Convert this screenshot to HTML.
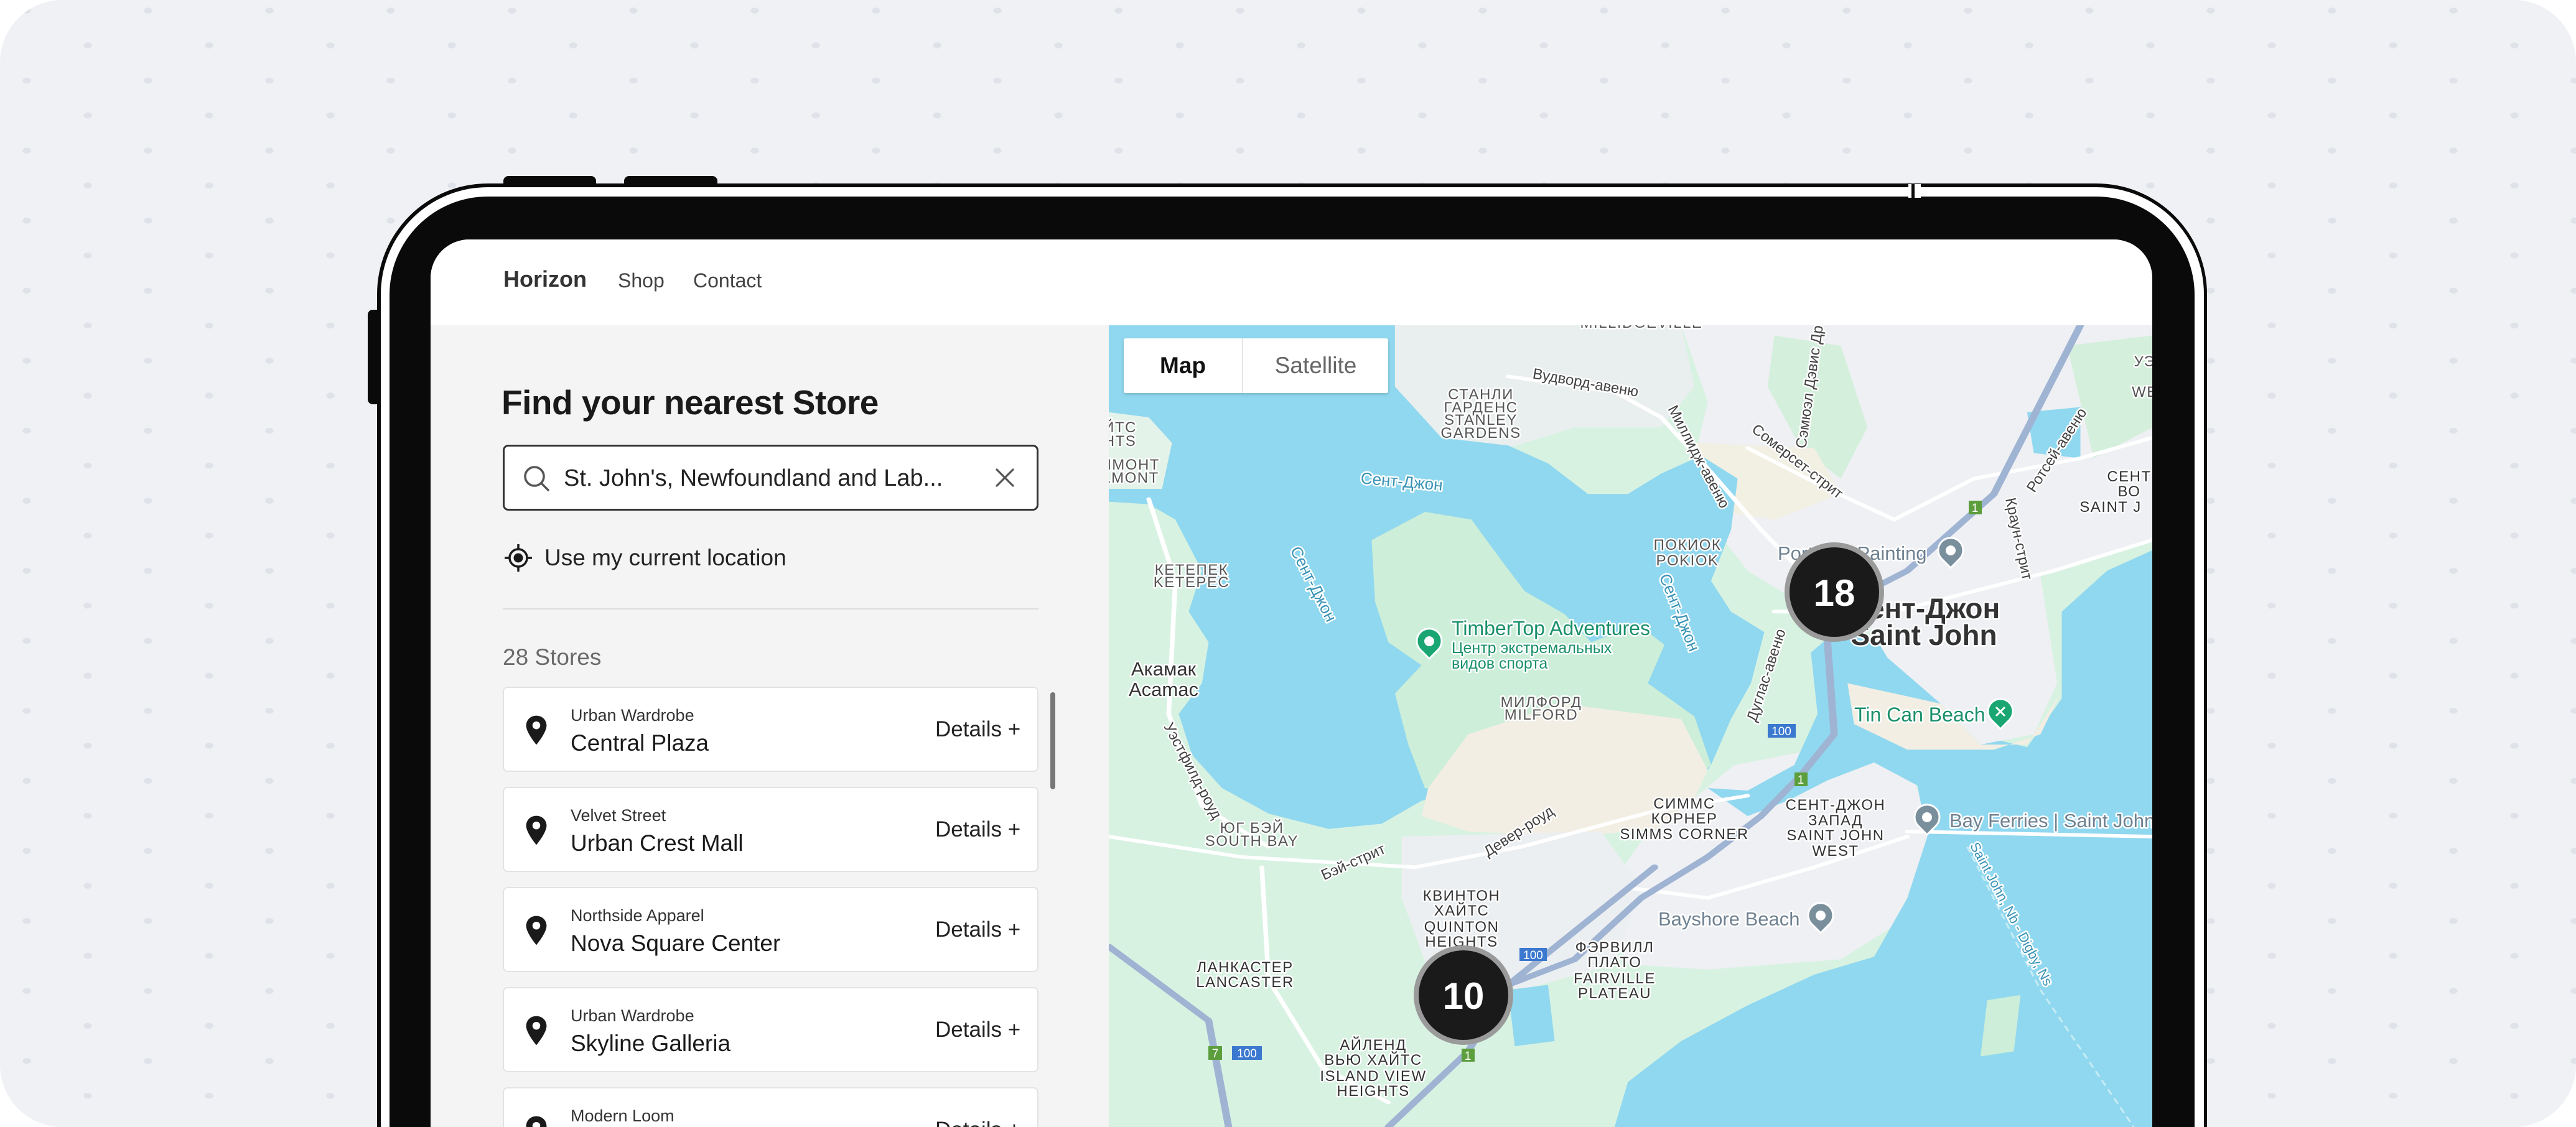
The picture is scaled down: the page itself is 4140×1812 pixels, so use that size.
<!DOCTYPE html>
<html><head><meta charset="utf-8"><style>
*{margin:0;padding:0;box-sizing:border-box}
html,body{width:4140px;height:1812px;overflow:hidden;background:#fff;font-family:"Liberation Sans","Noto Sans CJK SC",sans-serif}
.bg{position:absolute;left:0;top:0;width:4140px;height:1812px;border-radius:100px;background-color:#f0f1f5;
background-image:radial-gradient(ellipse 7px 5px at 141px 73px,#dfe2e8 90%,transparent 100%),radial-gradient(ellipse 7px 5px at 43px 17px,#dfe2e8 90%,transparent 100%);
background-size:195px 112.6px;overflow:hidden}
.abs{position:absolute}
.card{position:absolute;left:0;width:861px;height:137px;background:#fff;border:2px solid #e3e3e3;border-radius:8px}
.card .pin{position:absolute;left:33px;top:43px;width:38px;height:50px}
.card .lab{position:absolute;left:107px;top:28px;font-size:27px;color:#333;line-height:32px}
.card .nm{position:absolute;left:107px;top:67px;font-size:37px;color:#1a1a1a;line-height:44px}
.card .det{position:absolute;left:693px;top:46px;font-size:35px;color:#222;line-height:42px}
.m text{font-family:"Liberation Sans","Noto Sans CJK SC",sans-serif;paint-order:stroke;stroke:#fff;stroke-width:5px;stroke-linejoin:round}
</style></head><body>
<div class="bg">
  <div class="abs" style="left:809px;top:283px;width:149px;height:20px;background:#0a0a0a;border-radius:8px 8px 0 0"></div>
  <div class="abs" style="left:1003px;top:283px;width:150px;height:20px;background:#0a0a0a;border-radius:8px 8px 0 0"></div>
  <div class="abs" style="left:591px;top:498px;width:20px;height:152px;background:#0a0a0a;border-radius:8px 0 0 8px"></div>
  <div class="abs" style="left:606px;top:295px;width:2941px;height:1517px;background:#0a0a0a;border-radius:178px 178px 0 0"></div>
  <div class="abs" style="left:612px;top:301px;width:2930px;height:1511px;background:#fff;border-radius:172px 172px 0 0"></div>
  <div class="abs" style="left:626px;top:316px;width:2901px;height:1496px;background:#0a0a0a;border-radius:158px 158px 0 0"></div>
  <div class="abs" style="left:3067px;top:296px;width:20px;height:22px;background:#fff"></div>
  <div class="abs" style="left:3072px;top:296px;width:5px;height:22px;background:#0a0a0a"></div>
  <div class="abs" style="left:692px;top:385px;width:2767px;height:1427px;background:#f4f4f4;border-radius:62px 62px 0 0;overflow:hidden">
    <div class="abs" style="left:0;top:0;width:2767px;height:138px;background:#fff"></div>
    <div class="abs" style="left:117px;top:43px;font-size:36px;font-weight:bold;color:#333;line-height:42px">Horizon</div>
    <div class="abs" style="left:301px;top:45px;font-size:32px;color:#444;line-height:42px">Shop</div>
    <div class="abs" style="left:422px;top:45px;font-size:32px;color:#444;line-height:42px">Contact</div>
  </div>
  <div class="abs" style="left:806px;top:614px;font-size:55px;font-weight:bold;color:#1a1a1a;line-height:66px;letter-spacing:-0.5px">Find your nearest Store</div>
  <div class="abs" style="left:808px;top:715px;width:861px;height:106px;background:#fff;border:3px solid #333;border-radius:9px"></div>
  <svg class="abs" style="left:838px;top:745px" width="48" height="48" viewBox="0 0 48 48"><circle cx="21" cy="21" r="15" fill="none" stroke="#555" stroke-width="3.5"/><line x1="32" y1="32" x2="43" y2="43" stroke="#555" stroke-width="3.5" stroke-linecap="round"/></svg>
  <div class="abs" style="left:906px;top:746px;font-size:38px;color:#222;line-height:46px">St. John's, Newfoundland and Lab...</div>
  <svg class="abs" style="left:1598px;top:751px" width="34" height="34" viewBox="0 0 34 34"><path d="M4 4L30 30M30 4L4 30" stroke="#555" stroke-width="3.2" stroke-linecap="round"/></svg>
  <svg class="abs" style="left:811px;top:875px" width="44" height="44" viewBox="0 0 44 44"><circle cx="22" cy="22" r="14" fill="none" stroke="#1a1a1a" stroke-width="3.5"/><circle cx="22" cy="22" r="7.5" fill="#1a1a1a"/><path d="M22 0V8M22 36V44M0 22H8M36 22H44" stroke="#1a1a1a" stroke-width="3.5"/></svg>
  <div class="abs" style="left:875px;top:874px;font-size:37px;color:#222;line-height:46px">Use my current location</div>
  <div class="abs" style="left:808px;top:978px;width:861px;height:2px;background:#dcdcdc"></div>
  <div class="abs" style="left:808px;top:1035px;font-size:37px;color:#6a6a6a;line-height:44px">28 Stores</div>

  <div class="abs" style="left:808px;top:1104px;width:861px;height:708px;overflow:hidden">
  <div class="card" style="top:0"><svg class="pin" viewBox="0 0 24 32"><path d="M12 1C6 1 1.5 5.5 1.5 11.3 1.5 18.5 12 31 12 31S22.5 18.5 22.5 11.3C22.5 5.5 18 1 12 1z" fill="#1a1a1a"/><circle cx="12" cy="11" r="4" fill="#fff"/></svg><div class="lab">Urban Wardrobe</div><div class="nm">Central Plaza</div><div class="det">Details +</div></div>
  <div class="card" style="top:161px"><svg class="pin" viewBox="0 0 24 32"><path d="M12 1C6 1 1.5 5.5 1.5 11.3 1.5 18.5 12 31 12 31S22.5 18.5 22.5 11.3C22.5 5.5 18 1 12 1z" fill="#1a1a1a"/><circle cx="12" cy="11" r="4" fill="#fff"/></svg><div class="lab">Velvet Street</div><div class="nm">Urban Crest Mall</div><div class="det">Details +</div></div>
  <div class="card" style="top:322px"><svg class="pin" viewBox="0 0 24 32"><path d="M12 1C6 1 1.5 5.5 1.5 11.3 1.5 18.5 12 31 12 31S22.5 18.5 22.5 11.3C22.5 5.5 18 1 12 1z" fill="#1a1a1a"/><circle cx="12" cy="11" r="4" fill="#fff"/></svg><div class="lab">Northside Apparel</div><div class="nm">Nova Square Center</div><div class="det">Details +</div></div>
  <div class="card" style="top:483px"><svg class="pin" viewBox="0 0 24 32"><path d="M12 1C6 1 1.5 5.5 1.5 11.3 1.5 18.5 12 31 12 31S22.5 18.5 22.5 11.3C22.5 5.5 18 1 12 1z" fill="#1a1a1a"/><circle cx="12" cy="11" r="4" fill="#fff"/></svg><div class="lab">Urban Wardrobe</div><div class="nm">Skyline Galleria</div><div class="det">Details +</div></div>
  <div class="card" style="top:644px"><svg class="pin" viewBox="0 0 24 32"><path d="M12 1C6 1 1.5 5.5 1.5 11.3 1.5 18.5 12 31 12 31S22.5 18.5 22.5 11.3C22.5 5.5 18 1 12 1z" fill="#1a1a1a"/><circle cx="12" cy="11" r="4" fill="#fff"/></svg><div class="lab">Modern Loom</div><div class="nm">Harbor Point</div><div class="det">Details +</div></div>
  </div>
  <div class="abs" style="left:1688px;top:1113px;width:8px;height:156px;background:#777;border-radius:4px"></div>

  <div class="abs" style="left:1782px;top:523px;width:1677px;height:1289px;overflow:hidden;background:#d8f2e2">
    <svg class="abs" style="left:0;top:0" width="1677" height="1289" viewBox="0 0 1568 1568" preserveAspectRatio="none">
      <path d="M860,0 L1568,0 L1568,420 L1440,470 L1300,520 L1180,560 L1060,560 L960,480 L900,380 L880,260 L900,150 Z" fill="#eef0f3"/>
      <path d="M420,0 L860,0 L880,120 L830,200 L700,200 L600,240 L470,220 L420,150 Z" fill="#e9efee"/>
      <path d="M1000,20 L1100,40 L1140,200 L1100,300 L1040,240 L990,120 Z" fill="#d4f0dc"/>
      <path d="M1440,40 L1568,20 L1568,200 L1480,260 Z" fill="#d4f0dc"/>
      <path d="M880,230 L1060,240 L1100,330 L1000,380 L900,360 Z" fill="#f2efe3"/>
      <path d="M0,0 L430,0 L430,120 L500,220 L600,235 L660,270 L720,330 L780,330 L830,290 L890,255 L945,300 L935,400 L905,500 L935,560 L985,600 L965,700 L935,770 L905,860 L880,905 L800,895 L760,860 L720,880 L640,890 L540,910 L470,930 L410,975 L330,985 L240,955 L170,905 L125,840 L105,760 L140,700 L150,620 L120,560 L140,480 L100,380 L60,350 L0,345 Z" fill="#90d8ef"/>
      <path d="M0,170 L60,180 L95,230 L80,320 L0,320 Z" fill="#e3f3ea"/>
      <path d="M395,420 L475,365 L545,380 L590,460 L625,520 L685,565 L725,620 L795,585 L835,625 L810,700 L880,765 L905,860 L865,905 L700,905 L560,925 L475,905 L450,820 L430,720 L470,665 L420,620 L400,540 Z" fill="#cdeed9"/>
      <path d="M480,905 L540,800 L680,740 L860,770 L900,870 L860,980 L700,1000 L540,990 L470,960 Z" fill="#f2eee3"/>
      <path d="M940,860 L1060,830 L1200,850 L1240,1000 L1210,1150 L1100,1240 L900,1260 L780,1250 L740,1120 L800,1010 Z" fill="#eef0f3"/>
      <path d="M440,1000 L740,990 L800,1100 L760,1250 L620,1300 L480,1260 L440,1120 Z" fill="#eceff1"/>
      <path d="M900,905 L960,910 L1030,860 L1065,760 L1055,640 L1100,590 L1180,640 L1240,720 L1300,800 L1380,825 L1432,730 L1432,560 L1500,480 L1568,440 L1568,1568 L760,1568 L780,1480 L860,1400 L960,1330 L1060,1270 L1150,1235 L1200,1120 L1230,1000 L1215,900 L1150,855 L1080,890 L1020,930 L960,960 Z" fill="#90d8ef"/>
      <path d="M1120,540 L1400,490 L1425,700 L1390,800 L1310,820 L1250,740 L1170,650 Z" fill="#eef0f3"/>
      <path d="M1110,700 L1250,740 L1310,820 L1380,820 L1430,720 L1400,800 L1330,830 L1200,830 L1120,780 Z" fill="#f2eee3"/>
      <path d="M1380,170 L1460,160 L1460,260 L1390,250 Z" fill="#90d8ef"/>
      <path d="M600,1300 L660,1290 L670,1400 L610,1410 Z" fill="#90d8ef"/>
      <path d="M1320,1320 L1370,1310 L1360,1420 L1310,1430 Z" fill="#cdeed9"/>
      <g fill="none" stroke="#fff" stroke-width="7" stroke-linecap="round">
        <path d="M600,100 L760,130 L830,180 L900,280 L980,400 L1040,480"/>
        <path d="M960,240 L1080,320 L1180,380 L1300,300 L1460,260 L1568,220"/>
        <path d="M1000,560 L1180,560 L1300,520 L1420,480 L1568,420"/>
        <path d="M0,1000 L200,1040 L460,1060 L620,1020 L820,950 L960,920"/>
        <path d="M60,340 L100,500 L90,760 L140,940 L240,1020"/>
        <path d="M780,1100 L900,1120 L1060,1060 L1200,1000"/>
        <path d="M230,1060 L240,1280 L320,1450 L420,1520"/>
        <path d="M1200,990 L1568,1000"/>
      </g>
      <g fill="none" stroke="#9fb3d3" stroke-width="11" stroke-linecap="round" stroke-linejoin="round">
        <path d="M420,1568 L540,1420 L600,1290 L700,1240 L800,1120 L900,1040 L980,960 L1040,880 L1090,800 L1080,620 L1110,540 L1200,480 L1330,330 L1460,0"/>
        <path d="M0,1215 L150,1360 L180,1568"/>
        <path d="M600,1290 L820,1060"/>
      </g>
      <path d="M1290,1020 L1400,1300 L1540,1568" fill="none" stroke="#c7ecf5" stroke-width="3" stroke-dasharray="12 8"/>
    </svg>
    <svg class="abs m" style="left:0;top:0" width="1677" height="1289" viewBox="0 0 1677 1289">
      <g font-size="24" fill="#555" text-anchor="middle" letter-spacing="1.5">
        <text x="598" y="119">СТАНЛИ</text><text x="598" y="140">ГАРДЕНС</text><text x="598" y="160">STANLEY</text><text x="598" y="181">GARDENS</text>
        <text x="856" y="4">MILLIDGEVILLE</text>
        <text x="18" y="172">ЙТС</text><text x="18" y="194">HTS</text>
        <text x="35" y="232">ЛМОНТ</text><text x="35" y="253">LMONT</text>
        <text x="133" y="401">КЕТЕПЕК</text><text x="133" y="421">KETEPEC</text>
        <text x="930" y="361">ПОКИОК</text><text x="930" y="386">POKIOK</text>
        <text x="695" y="614">МИЛФОРД</text><text x="695" y="634">MILFORD</text>
        <text x="230" y="816">ЮГ БЭЙ</text><text x="230" y="837">SOUTH BAY</text>
        <text x="925" y="777" fill="#333">СИММС</text><text x="925" y="801" fill="#333">КОРНЕР</text><text x="925" y="826" fill="#333">SIMMS CORNER</text>
        <text x="1168" y="779" fill="#333">СЕНТ-ДЖОН</text><text x="1168" y="804" fill="#333">ЗАПАД</text><text x="1168" y="828" fill="#333">SAINT JOHN</text><text x="1168" y="853" fill="#333">WEST</text>
        <text x="567" y="925" fill="#333">КВИНТОН</text><text x="567" y="949" fill="#333">ХАЙТС</text><text x="567" y="975" fill="#333">QUINTON</text><text x="567" y="999" fill="#333">HEIGHTS</text>
        <text x="813" y="1008" fill="#333">ФЭРВИЛЛ</text><text x="813" y="1032" fill="#333">ПЛАТО</text><text x="813" y="1058" fill="#333">FAIRVILLE</text><text x="813" y="1082" fill="#333">PLATEAU</text>
        <text x="219" y="1040" fill="#333">ЛАНКАСТЕР</text><text x="219" y="1064" fill="#333">LANCASTER</text>
        <text x="425" y="1165" fill="#333">АЙЛЕНД</text><text x="425" y="1189" fill="#333">ВЬЮ ХАЙТС</text><text x="425" y="1215" fill="#333">ISLAND VIEW</text><text x="425" y="1239" fill="#333">HEIGHTS</text>
        <text x="1640" y="251" fill="#333">СЕНТ</text><text x="1640" y="275" fill="#333">ВО</text><text x="1610" y="300" fill="#333">SAINT J</text>
        <text x="1665" y="66">УЭ</text><text x="1665" y="115">WE</text>
      </g>
      <g font-size="24" fill="#444">
        <text transform="translate(765,100) rotate(10)" text-anchor="middle">Вудворд-авеню</text>
        <text transform="translate(941,215) rotate(62)" text-anchor="middle">Миллидж-авеню</text>
        <text transform="translate(1134,100) rotate(-82)" text-anchor="middle">Сэмюэл Дэвис Др</text>
        <text transform="translate(1102,225) rotate(38)" text-anchor="middle">Сомерсет-стрит</text>
        <text transform="translate(1530,205) rotate(-57)" text-anchor="middle">Ротсей-авеню</text>
        <text transform="translate(1455,345) rotate(78)" text-anchor="middle">Краун-стрит</text>
        <text transform="translate(1064,565) rotate(-72)" text-anchor="middle">Дуглас-авеню</text>
        <text transform="translate(663,820) rotate(-33)" text-anchor="middle">Девер-роуд</text>
        <text transform="translate(396,870) rotate(-24)" text-anchor="middle">Бэй-стрит</text>
        <text transform="translate(128,720) rotate(62)" text-anchor="middle">Уэстфилд-роуд</text>
      </g>
      <g font-size="26" fill="#3a93b5">
        <text transform="translate(470,260) rotate(5)" text-anchor="middle">Сент-Джон</text>
        <text transform="translate(321,420) rotate(63)" text-anchor="middle">Сент-Джон</text>
        <text transform="translate(909,465) rotate(68)" text-anchor="middle">Сент-Джон</text>
      </g>
      <text transform="translate(1444,950) rotate(62)" text-anchor="middle" font-size="22" fill="#3a93b5">Saint John, Nb - Digby, Ns</text>
      <text x="88" y="563" text-anchor="middle" font-size="31" fill="#333">Акамак</text>
      <text x="88" y="596" text-anchor="middle" font-size="31" fill="#333">Acamac</text>
      <text x="551" y="498" font-size="32" fill="#19906a">TimberTop Adventures</text>
      <text x="551" y="527" font-size="25" fill="#19906a">Центр экстремальных</text>
      <text x="551" y="552" font-size="25" fill="#19906a">видов спорта</text>
      <text x="1198" y="637" font-size="32" fill="#19906a">Tin Can Beach</text>
      <text x="1075" y="377" font-size="31" fill="#6f8190">Port City Painting</text>
      <text x="1351" y="807" font-size="31" fill="#6f8190">Bay Ferries | Saint John</text>
      <text x="883" y="965" font-size="31" fill="#6f8190">Bayshore Beach</text>
      <text x="1310" y="471" text-anchor="middle" font-size="46" fill="#333" font-weight="bold" stroke-width="6">Сент-Джон</text>
      <text x="1310" y="514" text-anchor="middle" font-size="46" fill="#333" font-weight="bold" stroke-width="6">Saint John</text>
      <g font-size="19" fill="#fff" text-anchor="middle">
        <rect x="1059" y="641" width="45" height="22" fill="#3b78cf"/><text x="1081" y="659" style="stroke:none">100</text>
        <rect x="660" y="1001" width="44" height="21" fill="#3b78cf"/><text x="682" y="1019" style="stroke:none">100</text>
        <rect x="198" y="1159" width="48" height="22" fill="#3b78cf"/><text x="222" y="1177" style="stroke:none">100</text>
        <rect x="1382" y="282" width="21" height="22" fill="#5d9e3c"/><text x="1392" y="300" style="stroke:none">1</text>
        <rect x="1102" y="719" width="21" height="22" fill="#5d9e3c"/><text x="1112" y="737" style="stroke:none">1</text>
        <rect x="567" y="1163" width="21" height="21" fill="#5d9e3c"/><text x="577" y="1181" style="stroke:none">1</text>
        <rect x="160" y="1159" width="22" height="22" fill="#5d9e3c"/><text x="171" y="1177" style="stroke:none">7</text>
      </g>
      <g>
        <g transform="translate(515,508)"><path d="M0,28 L-14,14 A20,20 0 1 1 14,14 Z" fill="#1aa673" stroke="#fff" stroke-width="3"/><circle r="8" fill="#fff"/></g>
        <g transform="translate(1433,621)"><path d="M0,28 L-14,14 A20,20 0 1 1 14,14 Z" fill="#1aa673" stroke="#fff" stroke-width="3"/><path d="M-7,-7 L7,7 M7,-7 L-7,7" stroke="#fff" stroke-width="3"/></g>
        <g transform="translate(1353,362)"><path d="M0,28 L-14,14 A20,20 0 1 1 14,14 Z" fill="#7a8f9c" stroke="#fff" stroke-width="3"/><circle r="8" fill="#fff"/></g>
        <g transform="translate(1315,791)"><path d="M0,28 L-14,14 A20,20 0 1 1 14,14 Z" fill="#7a8f9c" stroke="#fff" stroke-width="3"/><circle r="8" fill="#fff"/></g>
        <g transform="translate(1144,949)"><path d="M0,28 L-14,14 A20,20 0 1 1 14,14 Z" fill="#7a8f9c" stroke="#fff" stroke-width="3"/><circle r="8" fill="#fff"/></g>
      </g>
      <circle cx="1166" cy="429" r="76" fill="#1a1a1a" stroke="#9a9a9a" stroke-width="8"/>
      <text x="1166" y="451" text-anchor="middle" font-size="60" font-weight="bold" fill="#fff" style="stroke:none">18</text>
      <circle cx="570" cy="1077" r="76" fill="#1a1a1a" stroke="#9a9a9a" stroke-width="8"/>
      <text x="570" y="1099" text-anchor="middle" font-size="60" font-weight="bold" fill="#fff" style="stroke:none">10</text>
    </svg>
    <div class="abs" style="left:24px;top:21px;width:425px;height:88px;background:#fff;border-radius:3px;box-shadow:0 2px 6px rgba(0,0,0,.18)">
      <div class="abs" style="left:0;top:0;width:190px;height:88px;line-height:88px;text-align:center;font-size:37px;font-weight:bold;color:#111">Map</div>
      <div class="abs" style="left:190px;top:0;width:2px;height:88px;background:#e6e6e6"></div>
      <div class="abs" style="left:192px;top:0;width:233px;height:88px;line-height:88px;text-align:center;font-size:37px;color:#666">Satellite</div>
    </div>
  </div>
</div>
</body></html>
